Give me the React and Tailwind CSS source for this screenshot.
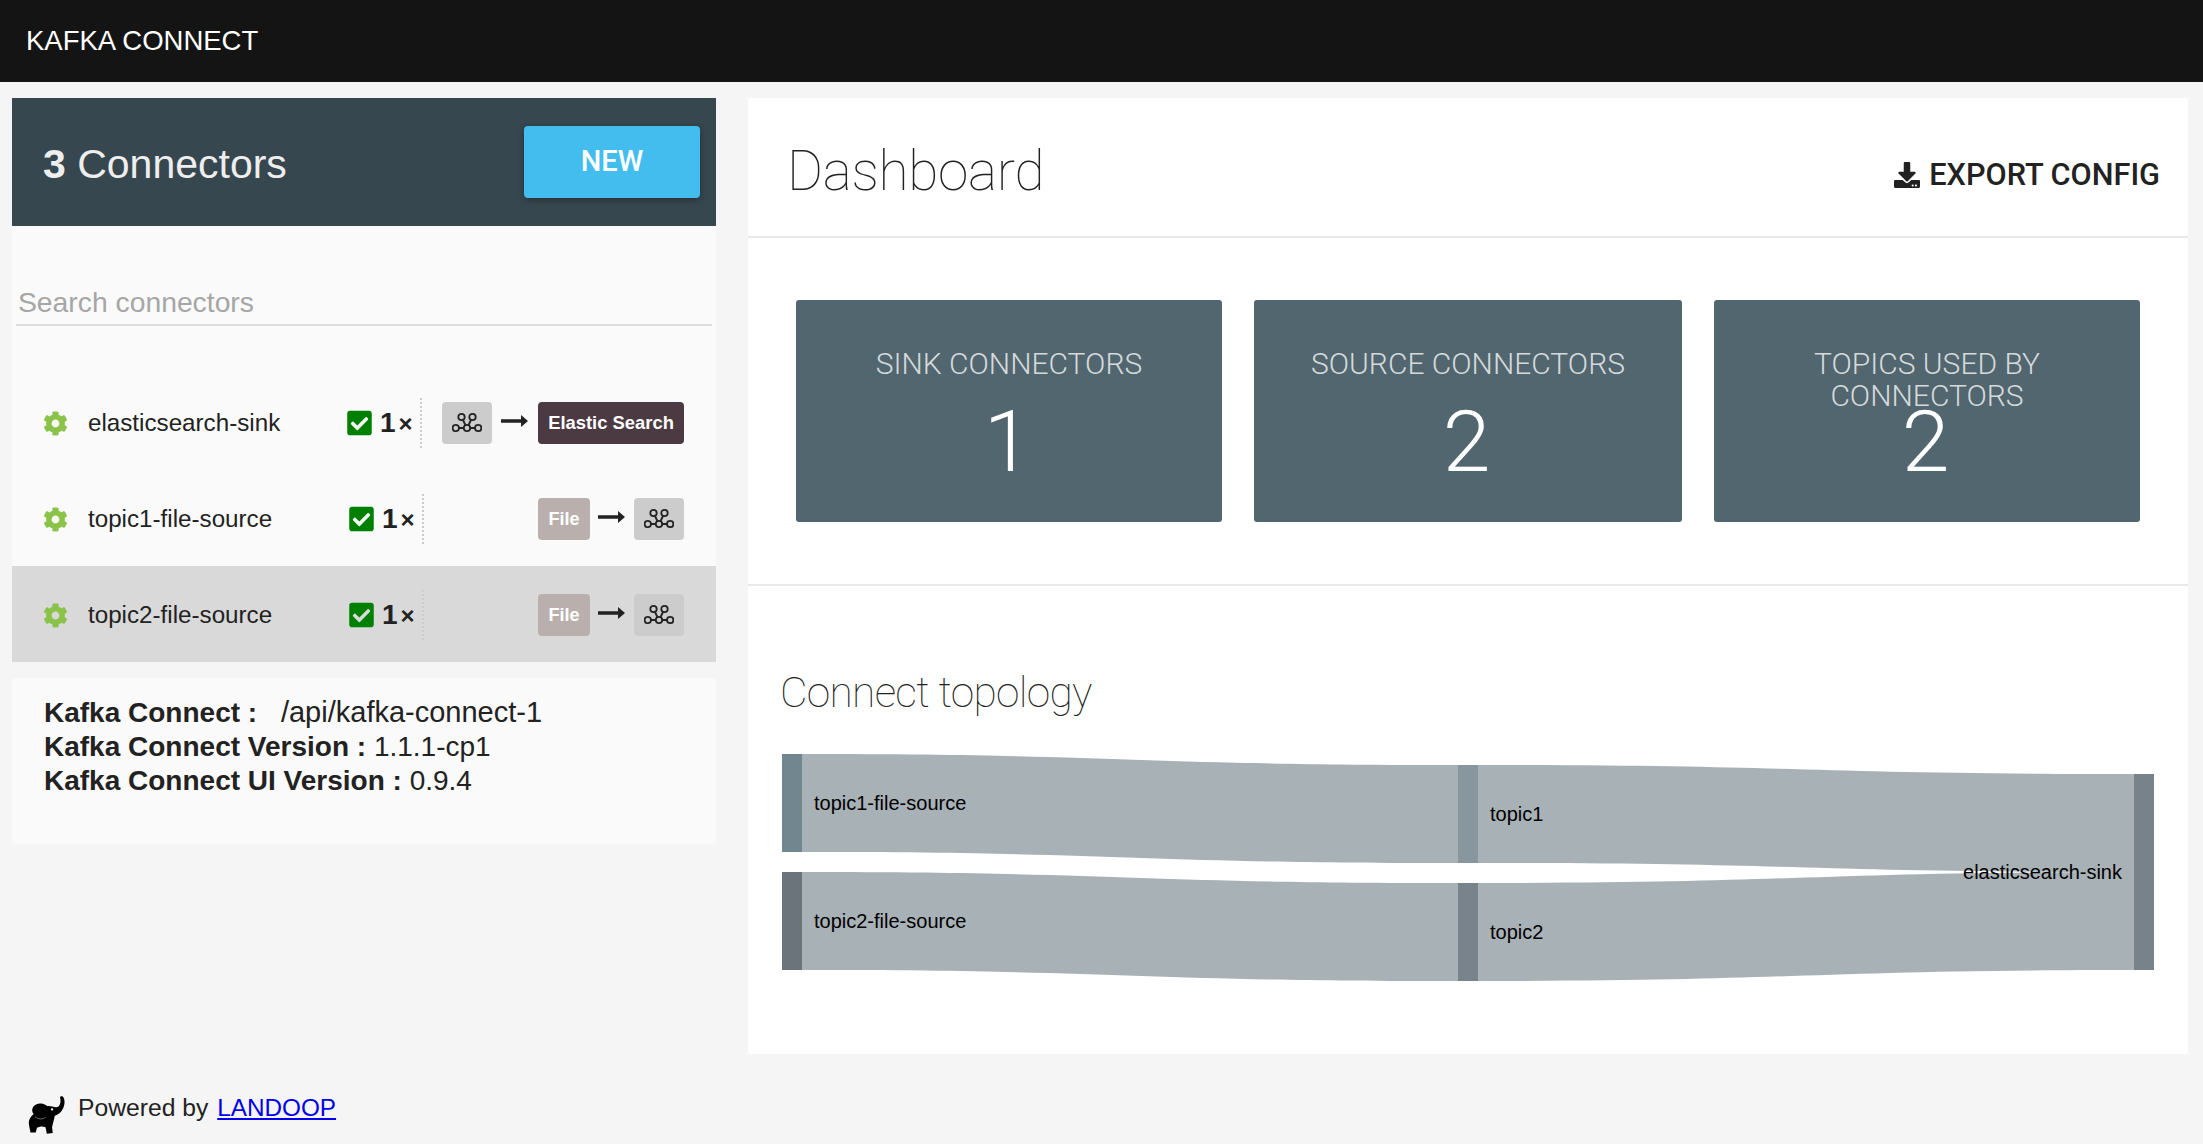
import { FaCheckSquare, FaCog, FaDownload } from "react-icons/fa";

const sans = "font-['Liberation_Sans',Arial,sans-serif]";

function KafkaIcon() {
  return (
    <svg width="30" height="22" viewBox="0 0 30 22" fill="none" stroke="#222" strokeWidth="1.8">
      <circle cx="9.5" cy="5" r="3.2" />
      <circle cx="20.5" cy="5" r="3.2" />
      <circle cx="3.8" cy="16" r="3.2" />
      <circle cx="15" cy="16" r="3.2" />
      <circle cx="26.2" cy="16" r="3.2" />
      <path d="M11 8l2.4 5M19 8l-2.4 5M7 16h4.800M18.200 16h4.800" />
    </svg>
  );
}

function Arrow() {
  return (
    <svg width="27" height="14" viewBox="0 0 27 14" fill="#222">
      <path d="M0 5.300h20V1l7 6-7 6V8.700H0z" />
    </svg>
  );
}

function KafkaBadge({ className }) {
  return (
    <div className={`flex h-[42px] items-center justify-center rounded-[4px] bg-[#cccccc] ${className}`}>
      <KafkaIcon />
    </div>
  );
}

function Elephant() {
  return (
    <svg width="38" height="40" viewBox="55 42 115 122" className="shrink-0">
      <path
        fill="#000"
        d="M158 45C168 50 168 70 162 82C156 96 146 102 136 106C134 118 130 130 128 140L130 158L112 160L108 140C96 136 90 138 82 142L78 156L62 156L57 130C56 118 62 108 72 100C62 90 68 70 90 68C100 66 108 72 114 76C126 74 140 84 148 76C156 68 154 56 152 48Z"
      />
      <circle cx="128" cy="86" r="3.500" fill="#fff" />
      <path d="M76 108C86 118 100 116 108 110" fill="none" stroke="#ddd" strokeWidth="1.500" />
    </svg>
  );
}

function ConnectorRow({ name, kind, nameWidth, selected }) {
  return (
    <div className={`flex h-[96px] items-center pl-[31px] pt-[2px] ${selected ? "bg-[#d9d9d9]" : ""}`}>
      <FaCog className="h-[25px] w-[25px] shrink-0 text-[#8bc34a]" />
      <div className={`ml-[20px] ${nameWidth} text-[24.200px] leading-none text-[#222222]`}>{name}</div>
      <FaCheckSquare className="h-[28px] w-[25px] shrink-0 text-[#008000]" />
      <div className="ml-[8px] flex w-[40px] items-baseline text-[#222222]">
        <span className="text-[28px] font-bold leading-none">1</span>
        <span className="ml-[3px] text-[24px] font-bold leading-none">×</span>
      </div>
      <div className="h-[50px] border-l-2 border-dotted border-[#cccccc]" />
      <div className="ml-auto mr-[32px] flex items-center">
        {kind === "sink" ? (
          <>
            <KafkaBadge className="w-[50px]" />
            <div className="ml-[9px] mr-[10px] -mt-[4px]"><Arrow /></div>
            <div className="flex h-[42px] w-[146px] items-center justify-center rounded-[4px] bg-[#4b3a42] text-[18.400px] font-bold text-white">
              Elastic Search
            </div>
          </>
        ) : (
          <>
            <div className="flex h-[42px] w-[52px] items-center justify-center rounded-[4px] bg-[#b9b0ae] text-[18px] font-bold text-white">
              File
            </div>
            <div className="ml-[8px] mr-[9px] -mt-[4px]"><Arrow /></div>
            <KafkaBadge className="w-[50px]" />
          </>
        )}
      </div>
    </div>
  );
}

function StatCard({ label, value }) {
  return (
    <div className="h-[222px] rounded-[3px] bg-[#51666f] px-[40px] pt-[48px] text-center">
      <div className="h-[53px] font-['Roboto',sans-serif] text-[30px] font-light leading-[32px] text-[#d5dadc]">{label}</div>
      <div className="pr-[3px] font-['Roboto',sans-serif] text-[86px] font-light leading-[82px] text-white">{value}</div>
    </div>
  );
}

function Sankey() {
  const link = "#a8b1b6";
  return (
    <svg width="1440" height="240" viewBox="748 750 1440 240" className="block">
      <path fill={link} d="M802 754C1130 754 1130 765 1458 765V863C1130 863 1130 852 802 852Z" />
      <path fill={link} d="M802 872C1130 872 1130 883 1458 883V981C1130 981 1130 970 802 970Z" />
      <path fill={link} d="M1478 765C1805 765 1805 774 2134 774V872C1805 872 1805 863 1478 863Z" />
      <path fill={link} d="M1478 883C1805 883 1805 872 2134 872V970C1805 970 1805 981 1478 981Z" />
      <rect x="782" y="754" width="20" height="98" fill="#71868f" />
      <rect x="782" y="872" width="20" height="98" fill="#6b737b" />
      <rect x="1458" y="765" width="20" height="98" fill="#87969f" />
      <rect x="1458" y="883" width="20" height="98" fill="#79838b" />
      <rect x="2134" y="774" width="20" height="196" fill="#78828a" />
      <g fontFamily="'Liberation Sans', Arial, sans-serif" fontSize="20" fill="#000">
        <text x="814" y="810">topic1-file-source</text>
        <text x="814" y="928">topic2-file-source</text>
        <text x="1490" y="821">topic1</text>
        <text x="1490" y="939">topic2</text>
        <text x="2122" y="879" textAnchor="end">elasticsearch-sink</text>
      </g>
    </svg>
  );
}

export default function App() {
  return (
    <div className={`min-h-screen bg-[#f5f5f5] ${sans}`}>
      <header className="flex h-[82px] items-center bg-[#141414] pl-[26px] text-[27.500px] text-white">
        KAFKA CONNECT
      </header>

      <main className="flex items-start pl-[12px] pt-[16px]">
        <div className="w-[704px]">
          <div className="flex h-[128px] items-center justify-between bg-[#37474f] pl-[31px] pr-[16px]">
            <div className="pt-[6px] text-[41px] text-[#eeeeee]">
              <span className="font-bold">3</span> Connectors
            </div>
            <button className="flex h-[72px] w-[176px] items-center justify-center rounded-[4px] bg-[#42bdee] font-['Roboto',sans-serif] text-[29px] font-medium text-white shadow-[0_2px_6px_rgba(0,0,0,0.35)]">
              NEW
            </button>
          </div>

          <div className="bg-[#fafafa]">
            <div className="h-[148px] px-[4px] pt-[56px]">
              <div className="border-b-2 border-[#dddddd] pb-[6px] pl-[2px] text-[28.300px] leading-[36px] text-[#a6a6a6]">
                <span className="relative top-[2px]">Search connectors</span>
              </div>
            </div>
            <ConnectorRow name="elasticsearch-sink" kind="sink" nameWidth="w-[259px]" />
            <ConnectorRow name="topic1-file-source" kind="source" nameWidth="w-[261px]" />
            <ConnectorRow name="topic2-file-source" kind="source" nameWidth="w-[261px]" selected />
          </div>

          <div className="mt-[16px] h-[166px] rounded-[2px] bg-[#fafafa] pl-[32px] pt-[17px] text-[28px] leading-[34px] text-[#222222]">
            <div><b>Kafka Connect : </b> <span className="ml-[16px] text-[29px]">/api/kafka-connect-1</span></div>
            <div><b>Kafka Connect Version : </b>1.1.1-cp1</div>
            <div><b>Kafka Connect UI Version : </b>0.9.4</div>
          </div>

          <div className="mt-[251px] flex items-start pl-[16px] text-[24.700px] leading-[26px] text-[#222222]">
            <Elephant />
            <span className="ml-[12px]">Powered by <a href="#" className="ml-[2px] text-[24.300px] text-[#0000ee] underline">LANDOOP</a></span>
          </div>
        </div>

        <section className="ml-[32px] h-[956px] w-[1440px] rounded-[2px] bg-white">
          <div className="flex h-[140px] items-center justify-between border-b-2 border-[#e9e9e9] pl-[39px] pr-[28px]">
            <h1 className="pt-[8px] font-['Roboto',sans-serif] text-[55px] font-thin leading-none tracking-[-0.3px] text-[#222222]">Dashboard</h1>
            <div className="flex items-center pt-[16px] font-['Roboto',sans-serif] text-[30.700px] font-medium leading-none text-[#222222]">
              <FaDownload className="mr-[9px] h-[26px] w-[26px]" />
              EXPORT CONFIG
            </div>
          </div>

          <div className="grid h-[348px] grid-cols-[426px_428px_426px] gap-[32px] border-b-2 border-[#e9e9e9] px-[48px] pt-[62px]">
            <StatCard label="SINK CONNECTORS" value="1" />
            <StatCard label="SOURCE CONNECTORS" value="2" />
            <StatCard label="TOPICS USED BY CONNECTORS" value="2" />
          </div>

          <h2 className="pl-[32px] pt-[82px] font-['Roboto',sans-serif] text-[42.500px] font-thin leading-[50px] tracking-[-0.7px] text-[#222222]">
            Connect topology
          </h2>
          <div className="mt-[32px]">
            <Sankey />
          </div>
        </section>
      </main>
    </div>
  );
}
